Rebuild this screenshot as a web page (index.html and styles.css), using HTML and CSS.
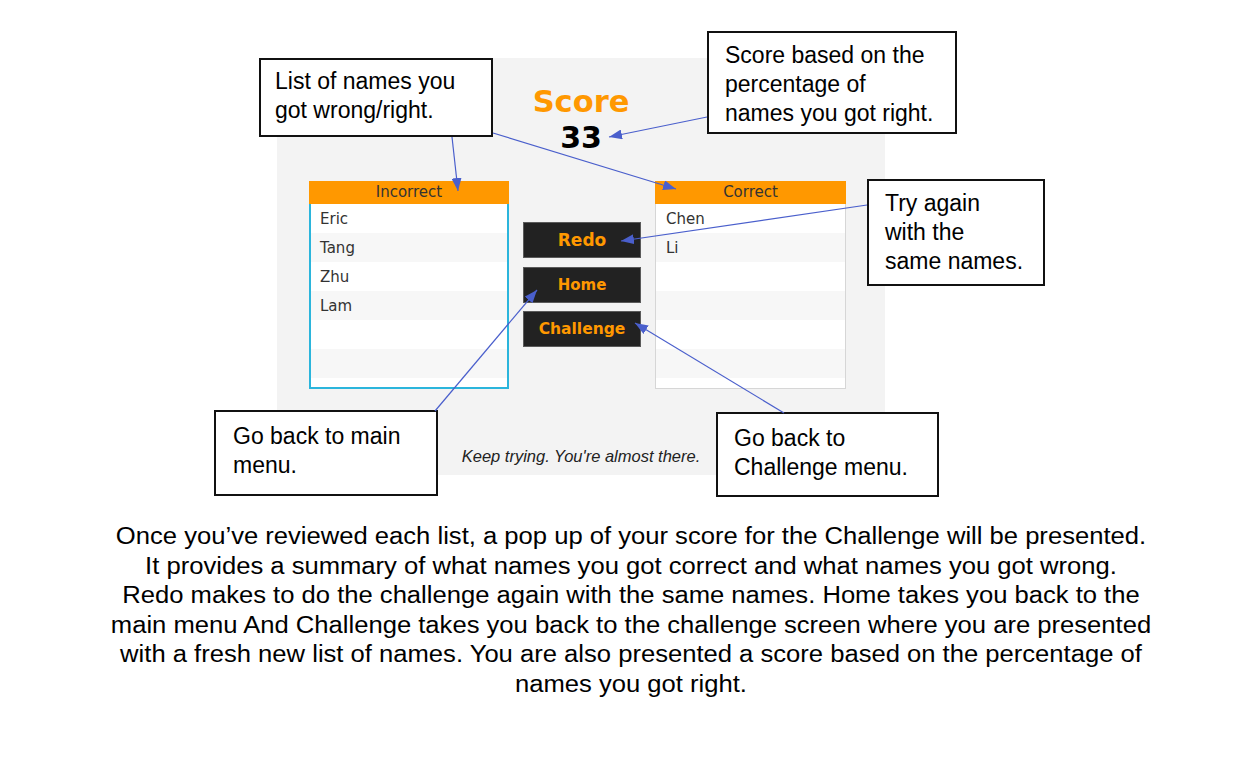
FILE: index.html
```html
<!DOCTYPE html>
<html lang="en">
<head>
<meta charset="utf-8">
<title>Score</title>
<link rel="stylesheet" href="styles.css">
</head>
<body>
<div class="stage">
  <div class="panel">
    <div class="score-title">Score</div>
    <div class="score-val">33</div>
    <div class="lists">
      <div class="list list-wrong">
        <div class="list-head">Incorrect</div>
        <div class="list-body">
          <div class="row">Eric</div>
          <div class="row alt">Tang</div>
          <div class="row">Zhu</div>
          <div class="row alt">Lam</div>
          <div class="row"></div>
          <div class="row alt"></div>
        </div>
      </div>
      <div class="buttons">
        <div class="btn btn-redo">Redo</div>
        <div class="btn btn-home">Home</div>
        <div class="btn btn-chal">Challenge</div>
      </div>
      <div class="list list-right">
        <div class="list-head">Correct</div>
        <div class="list-body">
          <div class="row">Chen</div>
          <div class="row alt">Li</div>
          <div class="row"></div>
          <div class="row alt"></div>
          <div class="row"></div>
          <div class="row alt"></div>
        </div>
      </div>
    </div>
    <div class="msg">Keep trying. You're almost there.</div>
  </div>

  <div class="callout c-list">List of names you<br>got wrong/right.</div>
  <div class="callout c-score">Score based on the<br>percentage of<br>names you got right.</div>
  <div class="callout c-redo">Try again<br>with the<br>same names.</div>
  <div class="callout c-home">Go back to main<br>menu.</div>
  <div class="callout c-chal">Go back to<br>Challenge menu.</div>

  <svg class="arrows" width="1258" height="520" viewBox="0 0 1258 520">
    <defs>
      <marker id="ah" markerUnits="userSpaceOnUse" markerWidth="14" markerHeight="10" refX="13" refY="5" orient="auto">
        <path d="M0,0 L13,5 L0,10 Z" fill="#4a5fcc"/>
      </marker>
    </defs>
    <g stroke="#4a5fcc" stroke-width="1.2" fill="none" marker-end="url(#ah)">
      <line x1="452" y1="137" x2="458" y2="191"/>
      <line x1="493" y1="133" x2="676" y2="189"/>
      <line x1="707" y1="117" x2="609" y2="137"/>
      <line x1="867" y1="205" x2="621" y2="241"/>
      <line x1="435" y1="411" x2="537" y2="290"/>
      <line x1="784" y1="413" x2="635" y2="323"/>
    </g>
  </svg>
</div>

<p class="desc">Once you’ve reviewed each list, a pop up of your score for the Challenge will be presented.<br>It provides a summary of what names you got correct and what names you got wrong.<br>Redo makes to do the challenge again with the same names. Home takes you back to the<br>main menu And Challenge takes you back to the challenge screen where you are presented<br>with a fresh new list of names. You are also presented a score based on the percentage of<br>names you got right.</p>
</body>
</html>
```

FILE: styles.css
```css
html, body {
  margin: 0;
  padding: 0;
  background: #ffffff;
}

body {
  width: 1258px;
  font-family: "Liberation Sans", Arial, sans-serif;
  color: #000;
}

.stage {
  position: relative;
  padding: 58px 0 0 277px;
  height: 475px;
  box-sizing: border-box;
}

.panel {
  width: 608px;
  height: 417px;
  background: #f3f3f3;
  box-sizing: border-box;
  padding-top: 27px;
  display: flex;
  flex-direction: column;
}

.score-title {
  text-align: center;
  font: bold 30.5px/34px "DejaVu Sans", sans-serif;
  color: #ff9800;
}

.score-val {
  text-align: center;
  margin-top: 2px;
  font: bold 30px/34px "DejaVu Sans", sans-serif;
  color: #000;
}

.lists {
  display: flex;
  align-items: flex-start;
  gap: 14px;
  margin-top: 26px;
  padding-left: 32px;
}

.list-wrong { width: 200px; }
.list-right { width: 191px; }

.list-head {
  height: 23px;
  background: #ff9800;
  text-align: center;
  font: 15px/23px "DejaVu Sans", sans-serif;
  color: #333;
}

.list-body {
  height: 185px;
  box-sizing: border-box;
  background: #fff;
}

.list-wrong .list-body {
  border: 2px solid #2bb5dc;
  border-top: none;
}

.list-right .list-body {
  border: 1px solid #d6d6d6;
  border-top: none;
}

.row {
  height: 29px;
  font: 15px/30px "DejaVu Sans", sans-serif;
  color: #333;
}

.list-wrong .row { padding-left: 9px; }
.list-right .row { padding-left: 10px; }

.row.alt { background: #f7f7f7; }

.buttons {
  display: flex;
  flex-direction: column;
  gap: 9px;
  margin-top: 41px;
  width: 118px;
}

.btn {
  height: 36px;
  box-sizing: border-box;
  background: #222;
  border: 1px solid #5a5a5a;
  color: #ff9800;
  font-family: "DejaVu Sans", sans-serif;
  font-weight: bold;
  display: flex;
  align-items: center;
  justify-content: center;
}

.btn-redo { font-size: 17px; }
.btn-home { font-size: 15px; }
.btn-chal { font-size: 15.5px; margin-top: -1px; }

.msg {
  margin-top: auto;
  padding-bottom: 9px;
  text-align: center;
  font: italic 16.5px/20px "Liberation Sans", Arial, sans-serif;
  color: #222;
}

.callout {
  position: absolute;
  background: #fff;
  border: 2px solid #111;
  box-sizing: border-box;
  font: 23px/29px "Liberation Sans", Arial, sans-serif;
  color: #000;
  white-space: nowrap;
}

.c-list  { left: 259px; top: 58px;  width: 234px; height: 79px;  padding: 7px 14px; }
.c-score { left: 707px; top: 31px;  width: 250px; height: 103px; padding: 8px 16px; }
.c-redo  { left: 867px; top: 179px; width: 178px; height: 107px; padding: 8px 16px; }
.c-home  { left: 214px; top: 410px; width: 224px; height: 86px;  padding: 10px 17px; }
.c-chal  { left: 716px; top: 412px; width: 223px; height: 85px;  padding: 10px 16px; }

.arrows {
  position: absolute;
  left: 0;
  top: 0;
  pointer-events: none;
}

.desc {
  width: 960px;
  margin: 47px 0 0 151px;
  text-align: center;
  white-space: nowrap;
  font: 23px/29.6px "Liberation Sans", Arial, sans-serif;
  color: #000;
  transform: scaleX(1.113);
  transform-origin: 50% 0;
}
```
